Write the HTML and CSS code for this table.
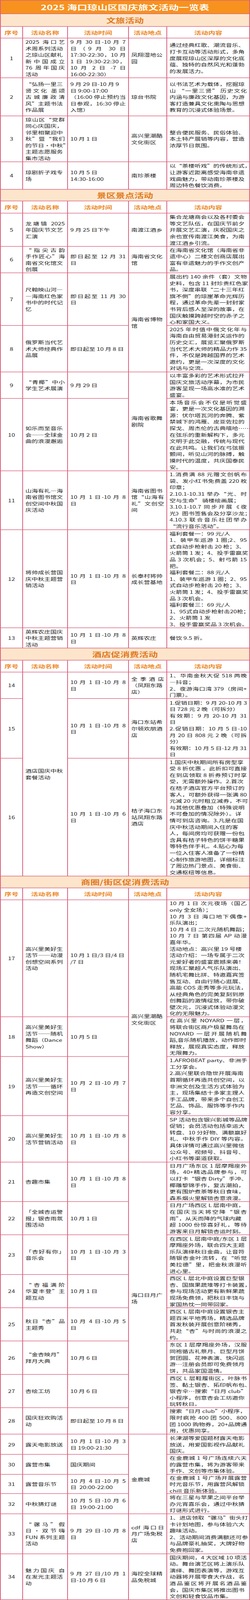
FILE: index.html
```html
<!DOCTYPE html>
<html lang="zh-CN">
<head>
<meta charset="utf-8">
<meta name="viewport" content="width=device-width, initial-scale=1">
<title>2025 海口琼山区国庆旅文活动一览表</title>
<link rel="stylesheet" href="styles.css">
</head>
<body>
<div class="sheet">
<div class="c full title">2025 海口琼山区国庆旅文活动一览表</div>

<div class="c full sec">文旅活动</div>
<div class="c hd">序号</div><div class="c hd">活动名称</div><div class="c hd">活动时间</div><div class="c hd">活动地点</div><div class="c hd">活动内容</div>

<div class="c n">1</div>
<div class="c"><span class="j">2025 海口艺</span>术周系列活动<br>之琼山区献礼<span class="j">新中国成立</span><span class="j">76 周年国庆</span>活动</div>
<div class="c"><span class="j">9 月 30 日-10 月 7</span><span class="j">日（9 月 30 日</span><span class="j">17:30-22:30，10 月</span><span class="j">1 日 19:30-22:30，</span><span class="j">10 月 2 日 -7 日</span>16:00-22:30）</div>
<div class="c">凤翔湿地公<br>园</div>
<div class="c">通过经典红歌、潮流音乐、<br>打卡互动等活动形式，多角<br>度展现琼山区深厚的文化底<br>蕴、独特的自然风光和蓬勃<br>的发展活力。</div>

<div class="c n">2</div>
<div class="c">“弘扬一里三<span class="j">贤文化 墨颂</span><span class="j">古城廉政清</span>风”主题书法<br>作品展</div>
<div class="c">9 月 29 日-10 月 9<br>日 9:00-17:00<span class="j">（16:00 停止预约当</span><span class="j">日参观，16:30 停止</span>入馆）</div>
<div class="c">琼台书院</div>
<div class="c">以书法艺术为载体，挖掘琼<span class="j">山 “一里三贤” 历史文化</span>内涵与廉政文化基因，为游<br>客打造兼具文化熏陶与思想<br>教育的沉浸式体验场景。</div>

<div class="c n">3</div>
<div class="c"><span class="j">琼山区“党群</span>同心庆国庆，<br>邻里相聚迎中<span class="j">秋”暨“我们</span>的节日·中秋”<br>主题志愿服务<br>集市活动</div>
<div class="c">10 月 1 日</div>
<div class="c">高兴里潮酷<br>文化街区</div>
<div class="c">整合便民服务、民俗体验、<br>本土特产展销等内容，营造<br>浓厚节日氛围。</div>

<div class="c n">4</div>
<div class="c">琼剧折子戏专<br>场</div>
<div class="c">10 月 5 日<br>14:30-16:00</div>
<div class="c">南珍茶楼</div>
<div class="c">以“茶楼听戏”的传统形式，<br>让游客近距离感受海南非遗<br>戏曲魅力，带动南珍茶楼及<br>周边特色餐饮消费。</div>

<div class="c full sec">景区景点活动</div>
<div class="c hd">序号</div><div class="c hd">活动名称</div><div class="c hd">活动时间</div><div class="c hd">活动地点</div><div class="c hd">活动内容</div>

<div class="c n">5</div>
<div class="c"><span class="j">龙塘镇 2025</span>年国庆节文艺<br>汇演</div>
<div class="c">9 月 25 日下午</div>
<div class="c">南渡江酒乡</div>
<div class="c">集合龙塘商会以及各村委会<br>等文艺队伍，在国庆节前夕<br>开展文艺汇演，庆祝国庆之<br>余也宣传南渡江美食，为南<br>渡江酒乡引流。</div>

<div class="c n">6</div>
<div class="c"><span class="j">“指尖古韵</span><span class="j">手作匠心”海</span>南省文化馆文<br>创展</div>
<div class="c"><span class="j">即日起至 12 月 31</span>日</div>
<div class="c">海南省文化<br>馆</div>
<div class="c">在海南省文化馆（海南省非<br>遗中心）二楼文创商店展出<br>富有非遗魅力的手作文创产<br>品。</div>

<div class="c n">7</div>
<div class="c">尺翰映山河—<br>—海南红色家<br>书中的时代记<br>忆</div>
<div class="c"><span class="j">即日起至 11 月 30</span>日</div>
<div class="c s2">海南省博物<br>馆</div>
<div class="c"><span class="j">展出约 140 余件（套）文物</span><span class="j">史料，包含 11 封珍贵红色家</span>书，深度串联“二十三年红<br>旗不倒”的琼崖革命光辉历<br>程，通过革命先辈一封封家<br>书背后感人至深的故事，在<br>国庆触摸跨越时空的赤子之<br>心和家国大义。</div>

<div class="c n">8</div>
<div class="c">俄罗斯当代艺<br>术大师经典作<br>品展</div>
<div class="c">即日起至 10 月 8 日</div>
<div class="c"><span class="j">2025 年时值中俄文化年与</span>海南自由贸易港封关运作的<br>历史交汇，展览汇聚俄罗斯<br><span class="j">当代艺术大师的精品力作 35</span>件，不仅是跨越国界的艺术<br>邀约，更是一次深度的文化<br>对话与交流。</div>

<div class="c n">9</div>
<div class="c"><span class="j">“青椰”中小</span>学生艺术展演</div>
<div class="c">9 月 29 日</div>
<div class="c s2">海南省歌舞<br>剧院</div>
<div class="c">以丰富多彩的艺术形式拉开<br>国庆文旅活动序幕，为市民<br>游客呈现一场高水准的艺术<br>盛宴。</div>

<div class="c n">10</div>
<div class="c">如乐而至音乐<br>会——全球金<br>曲的浪漫邂逅</div>
<div class="c">10 月 2 日</div>
<div class="c"><span class="j">本场音乐会不仅是听觉盛</span>宴，更是一次文化基因的溯<br>源：伏尔塔瓦河的奔腾、紫<br>禁城下的鸿雁、皮亚佐拉的<br><span class="j">探戈、周杰伦的古典嘻哈……</span>在弦乐的重新解构下，多元<br>文明于此交融，传统与现代<br>在此共鸣。让我们在弓弦振<br>颤间，听见山河的脉搏，触<br>摸时代的温度，共庆国泰民<br>安。</div>

<div class="c n">11</div>
<div class="c">山海有礼—海<br>南省图书馆文<br>创空间中秋国<br>庆活动</div>
<div class="c"><span class="j">10 月 1 日-10 月 8</span>日</div>
<div class="c">海南省图书<span class="j">馆“山海有</span><span class="j">礼”文创空</span>间</div>
<div class="c"><span class="j">1.消费满 88 元赠文创帆布</span><span class="j">袋、发小红书免费盖 220 枚</span>印章；<span class="j">2.10.1-10.31 举办“光、时</span>空与生命” 骑楼绘画展；<span class="j">3.10.1-10.7 同步开展《夜</span>光》图书签售会及分享沙龙；<span class="j">4.10.3 联合音乐社团举办</span>“流行音乐活动”。</div>

<div class="c n">12</div>
<div class="c">将帅成长营国<br>庆中秋主题营<br>销活动</div>
<div class="c"><span class="j">10 月 1 日-10 月 8</span>日</div>
<div class="c">长泰村将帅<br>成长营基地</div>
<div class="c">福利套餐一：99 元/人<span class="j">1、装甲车巡游 1 圈;2、95</span>式自动步枪射击 20 枪；3、<br>火箭筒 1 发；4、投手雷赢奖<span class="j">品 3 次机会；5、射弓箭 15</span>把。<br>福利套餐二：88 元/人<span class="j">1、装甲车巡游 1 圈；2、95</span>式自动步枪射击 20 枪；3、<br>火箭筒 1 发；4、投手雷赢奖<br>品 3 次机会。<br>福利套餐三：69 元/人<br>1、95式自动步枪射击20枪；<br>2、火箭筒 1 发<br>3、投手雷赢奖品 3 次机会。</div>

<div class="c n">13</div>
<div class="c">英辉农庄国庆<br>中秋主题营销<br>活动</div>
<div class="c"><span class="j">10 月 1 日-10 月 8</span>日</div>
<div class="c">英辉农庄</div>
<div class="c">餐饮 9.5 折。</div>

<div class="c full sec">酒店促消费活动</div>
<div class="c hd">序号</div><div class="c hd">活动名称</div><div class="c hd">活动时间</div><div class="c hd">活动地点</div><div class="c hd">活动内容</div>

<div class="c n">14</div>
<div class="c s3">酒店国庆中秋<br>套餐活动</div>
<div class="c"><span class="j">10 月 1 日-10 月 8</span>日</div>
<div class="c"><span class="j">全季酒店</span>（凤翔东路<br>店）</div>
<div class="c"><span class="j">1、华南金秋大促 518 两晚</span>—抖音；<span class="j">2、夜游海口湾 379（房间+</span>门票）。</div>

<div class="c n">15</div>
<div class="c"><span class="j">10 月 1 日-10 月 8</span>日</div>
<div class="c">海口东站希<br>尔顿欢朋酒<br>店</div>
<div class="c"><span class="j">1.促销日期：9 月 20-10 月 3</span>日 728 元 2 晚（可拆分）<span class="j">有效期：9 月 20-10 月 31</span>日<span class="j">2.促销日期：10 月 5 日-10</span><span class="j">月 20 日 808 元 2 晚（可拆</span>分）<span class="j">有效期：10 月 5 日-12 月 31</span>日</div>

<div class="c n">16</div>
<div class="c"><span class="j">10 月 1 日-10 月 6</span>日</div>
<div class="c">桔子海口东<br>站凤翔东路<br>酒店</div>
<div class="c">1.国庆中秋期间所有房型享<span class="j">受 8 折优惠 。此折扣可直接</span><span class="j">在到店领取 8 折券预订时享</span>受，无需额外操作。2.首次<br>在桔子酒店官方平台预订的<span class="j">客人，可额外获得一张满 80</span>元减 20 元时租立减券，不可<br>与其他优惠叠加（特殊说明<br>不可叠加的情况除外）。详<br>情可到店咨询。3.凡是在国<br>庆中秋活动期间入住的客<br>人，每间房均可获赠一份包<br>含具有桔子特色的饼干糖果<br>等特色伴手礼。4.贴心为每<br>一位入住客人准备了一份精<br>心制作旅游地图，详细标注<br>了周边热门景点、美食街、<br>交通枢纽等信息。</div>

<div class="c full sec">商圈/街区促消费活动</div>
<div class="c hd">序号</div><div class="c hd">活动名称</div><div class="c hd">活动时间</div><div class="c hd">活动地点</div><div class="c hd">活动内容</div>

<div class="c n">17</div>
<div class="c">高兴里美好生<br>活节——动漫<br>创想空间系列<br>活动</div>
<div class="c">10 月 1 日/3 日/4 日<br>/7 日</div>
<div class="c s4 lift">高兴里潮酷<br>文化街区</div>
<div class="c"><span class="j">10 月 1 日 次元夜场（国乙</span>only 全女场）；<span class="j">10 月 3 日 海口地下偶像+</span>乐队演出；<br>10 月 4 日 二次元随机舞蹈；<span class="j">10 月 7 日 第四届 AP 动漫</span>嘉年华。<br>活动地点：高兴里 19 号楼<br>活动介绍：一场专属于二次<br>元爱好者的盛宴震撼来袭！<br>现场汇聚超人气乐队演出、<br>随机宅舞比拼、特邀嘉宾签<br>售互动、自由行随心逛展、<br>高能 COS 走秀等多元玩法，<br>从经典角色的完美复刻到原<br>创舞蹈的激情绽放，带你破<br>壁次元，沉浸式体验动漫文<br>化的无限魅力。</div>

<div class="c n">18</div>
<div class="c">高兴里美好生<br>活节——随机<br>舞蹈（Dance<br>Show）</div>
<div class="c">10 月 5 日</div>
<div class="c"><span class="j">在高兴里 NOYARD 一层，</span>将联合街区商户极星舞岛在<span class="j">NOYARD 一层开展随机舞</span>蹈,音乐随机播放，动作即时<br>释放，展现真实态度，释放<br>无限舞力。</div>

<div class="c n">19</div>
<div class="c">高兴里美好生<br>活节——循环<br>再造文创空间</div>
<div class="c"><span class="j">10 月 2 日-10 月 7</span>日</div>
<div class="c"><span class="j">1.AFROBEAT party、非洲手</span>工分享会。<br>2.高兴里联合隐世开展海南<br>首期循环再造共创空间，以<br>非洲文创及生活方式体验为<br>主，现场集结十多家主理人<br>手工品牌，带来多个自创工<br>艺品、饰品、服饰等手作内<br>容分享。</div>

<div class="c n">20</div>
<div class="c">高兴里美好生<br>活节营销活动</div>
<div class="c"><span class="j">10 月 1 日-10 月 8</span>日</div>
<div class="c">SP 活动包含银兴影城等品牌<br>促销；会员活动包括幸运大<span class="j">转盘、10 分好物、满额赢好</span><span class="j">礼、中秋手作 DIY 等内容。</span>具体详情可通过高兴里微信<br>公众号、视频号、抖音号、<br>小红书等渠道获取。</div>

<div class="c n">21</div>
<div class="c">杏趣市集</div>
<div class="c"><span class="j">10 月 1 日-10 月 8</span>日</div>
<div class="c s8">海口日月广<br>场</div>
<div class="c"><span class="j">日月广场东区 1 层摩羯座外</span><span class="j">场，40+精选品牌参与，可</span>以打卡“银杏 Dirty”手冲、<br>椰雕黎锦手作，复古潮拍，<br>更有围炉煮茶等秋日食味，<br>森系烟火里解锁杏意浪漫。</div>

<div class="c n">22</div>
<div class="c">「全城杏运警<br>报」银杏雨氛<br>围活动</div>
<div class="c">10 月 1 日</div>
<div class="c">日月广场西区 L 层南中庭，<span class="j">在国庆当天将空降“银杏</span>雨”，从天而降的气球内藏<span class="j">超 1000 份惊喜好礼，等待</span>游客来日月解锁杏运时刻。</div>

<div class="c n">23</div>
<div class="c"><span class="j">「杏好有你」</span>音乐会</div>
<div class="c"><span class="j">10 月 1 日-10 月 3</span>日</div>
<div class="c">在西区 L 层南中庭/东区 1 层<br>摩羯座外场，联合四大主题<br>乐队演绎秋日金曲，让音符<span class="j">随银杏金叶流转，在“听觉</span><span class="j">美拉德”里，把金秋浪漫听</span>进心里。</div>

<div class="c n">24</div>
<div class="c"><span class="j">“杏福满阶</span><span class="j">华夏丰登”主</span>题互动</div>
<div class="c">10 月 1 日</div>
<div class="c">西区 L 层北中庭设置巨型银<br>杏、国旗果蔬堆等打卡装置，<br>参与现场活动更有新鲜果蔬<br>现场免费领，把秋日丰饶与<br>家国热忱一同带回家。</div>

<div class="c n">25</div>
<div class="c"><span class="j">秋日“杏”品</span>主题秀</div>
<div class="c"><span class="j">10 月 4 日-10 月 5</span>日</div>
<div class="c">西区 L 层南中庭设置银杏主<br>题百米平地秀场，精选品牌<br>首发秋装开展创意阶梯秀，<span class="j">共赴“杏”与时尚的浪漫之</span>约。</div>

<div class="c n">26</div>
<div class="c">“金杏映月”<br>拜月大典</div>
<div class="c">10 月 6 日</div>
<div class="c"><span class="j">东区 1 层摩羯座外场，汉服</span>同袍循古礼祭月、巨型月饼<br>贺团圆、花神表演、快闪巡<br>游…注册会员即可免费领月<br>饼，共品家国温情。</div>

<div class="c n">27</div>
<div class="c">杏绘工坊</div>
<div class="c">10 月 6 日</div>
<div class="c"><span class="j">西区 L 层鞋履街区，叶脉书</span>签、黏土银杏、拓印帆布包、<span class="j">银杏伞…搜索“日月 club”</span>小程序，创意杏会工坊邀你<br>玩转秋日。</div>

<div class="c n">28</div>
<div class="c">国庆狂欢购活<br>动</div>
<div class="c">即日起至 10 月 8 日</div>
<div class="c">搜索“日月 club”小程序，<span class="j">限时疯抢 400 团 500、800</span><span class="j">团 1000 购物券，20+品牌通</span>用，优惠同享。</div>

<div class="c n">29</div>
<div class="c">露天电影放送</div>
<div class="c"><span class="j">10 月 1 日-10 月 3</span>日 19:00-21:30</div>
<div class="c s4 drop">金鹿城</div>
<div class="c">长津湖等爱国题材露天电影<br>放送，用爱国影视作品献礼<br>国庆。</div>

<div class="c n">30</div>
<div class="c">露营市集</div>
<div class="c">国庆期间</div>
<div class="c"><span class="j">在金鹿城 1 号广场连续六天</span>的露营市集，将为游客带来<br>手作、文创等市集体验。</div>

<div class="c n">31</div>
<div class="c">露营音乐节</div>
<div class="c"><span class="j">10 月 4 日-10 月 5</span>日&nbsp; 20:00-22:00</div>
<div class="c"><span class="j">在金鹿城 1 号广场开展露营</span>时光音乐节，用露营风解锁<br>chill 音乐新体验。</div>

<div class="c n">32</div>
<div class="c">中秋猜灯谜</div>
<div class="c"><span class="j">10 月 5 日-10 月 6</span>日&nbsp; 19:00-21:00</div>
<div class="c">将在三星与苹果之间平台举<br>办元宵喜乐会，通过中秋猜<br>灯谜形式进行。</div>

<div class="c n">33</div>
<div class="c"><span class="j">“骡马”假</span><span class="j">日·双节嗨</span><span class="j">FUN 系列主题</span>活动</div>
<div class="c"><span class="j">9 月 29 日-10 月 8</span>日</div>
<div class="c"><span class="j">cdf 海口日</span>月广场免税<br>店</div>
<div class="c"><span class="j">1、进店领取“骡马”街头打</span>卡计划地图，参与体验六大<br>趣味活动。<br>2、活动期间消费满额还可参<br>与品牌豪礼抽奖，大牌好物<br>免费抱回家。</div>

<div class="c n">34</div>
<div class="c"><span class="j">魅力国庆 自</span>在发光主题活<br>动</div>
<div class="c"><span class="j">9 月 27 日/10 月 1</span>日-10 月 6 日</div>
<div class="c">海控全球精<br>品免税城</div>
<div class="c"><span class="j">国庆期间，4 大区域 10 项活</span>动。舞台演艺区将上演乐队<br>演绎、舞团表演等，游戏互<br>动器将开展零食大作战，名<br><span class="j">酒品鉴区将开展名酒品鉴</span>会，国庆市集区将推出图书<br>文创和轻食饮品市集。</div>
</div>
</body>
</html>
```

FILE: styles.css
```css
* {
  box-sizing: border-box;
}

html {
  -webkit-text-size-adjust: none;
  text-size-adjust: none;
}

html, body {
  margin: 0;
  padding: 0;
  background: #ffffff;
}

body {
  font-family: "Noto Sans CJK SC", "Noto Sans", sans-serif;
  color: #222222;
}

/* The capture window is clamped to 4096px tall; the 5923px sheet is
   scaled vertically so the whole table lands inside the photographed area. */
.sheet {
  width: 640px;
  display: grid;
  grid-template-columns: 55px 113px 154px 96px 210px;
  grid-template-rows: 48px 45px 41px 145px 139px 168px 100px 41px 43px 121px 96px 193px 170px 96px 266px 216px 361px 73px 43px 42px 96px 219px 434px 42px 42px 431px 145px 217px 170px 144px 121px 145px 121px 121px 122px 121px 96px 73px 72px 69px 73px 146px 168px;
  gap: 2px;
  padding: 2px;
  background: #d9607d;
  transform: scaleY(0.69154);
  transform-origin: 0 0;
}

.c {
  background: #ffffff;
  display: flex;
  flex-direction: column;
  justify-content: center;
  padding: 0 6px;
  min-width: 0;
  font-size: 16px;
  line-height: 24px;
  white-space: nowrap;
  text-align: left;
}

.j {
  display: block;
  text-align: justify;
  text-align-last: justify;
}

.n {
  align-items: center;
  padding: 0;
}

.full {
  grid-column: 1 / -1;
  align-items: center;
  padding: 0;
}

.title {
  background: #f7921e;
  color: #ffffff;
  font-size: 26px;
  font-weight: 700;
}

.sec {
  background: #fde5cb;
  color: #e0781a;
  font-size: 24px;
  font-weight: 700;
}

.hd {
  align-items: center;
  padding: 0;
  color: #ec8621;
  font-size: 18px;
  font-weight: 700;
}

.s2 { grid-row: span 2; }
.s3 { grid-row: span 3; }
.s4 { grid-row: span 4; }
.s8 { grid-row: span 8; }

.lift {
  padding-bottom: 86px;
}

.drop {
  padding-top: 38px;
}
```
